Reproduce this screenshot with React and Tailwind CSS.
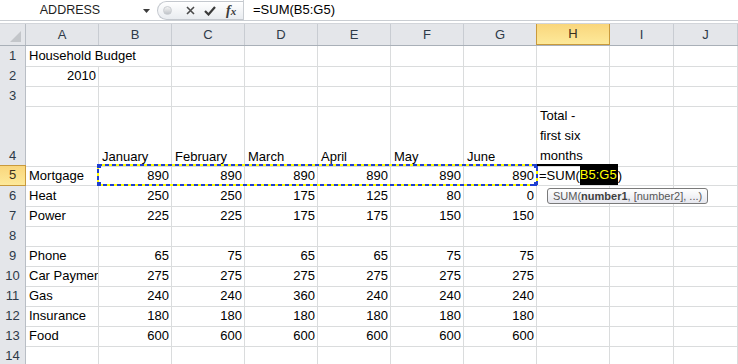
import React from 'react'

const COLS = 'grid grid-cols-[26px_repeat(8,73px)_64px_1fr]'
const LETTERS = ['A', 'B', 'C', 'D', 'E', 'F', 'G', 'H', 'I', 'J']

const rows = [
  { n: 1, cells: ['Household Budget'] },
  { n: 2, cells: [2010] },
  { n: 3, cells: [] },
  { n: 4, tall: true, cells: ['', 'January', 'February', 'March', 'April', 'May', 'June'] },
  { n: 5, cells: ['Mortgage', 890, 890, 890, 890, 890, 890] },
  { n: 6, cells: ['Heat', 250, 250, 175, 125, 80, 0] },
  { n: 7, cells: ['Power', 225, 225, 175, 175, 150, 150] },
  { n: 8, cells: [] },
  { n: 9, cells: ['Phone', 65, 75, 65, 65, 75, 75] },
  { n: 10, cells: ['Car Payment', 275, 275, 275, 275, 275, 275] },
  { n: 11, cells: ['Gas', 240, 240, 360, 240, 240, 240] },
  { n: 12, cells: ['Insurance', 180, 180, 180, 180, 180, 180] },
  { n: 13, cells: ['Food', 600, 600, 600, 600, 600, 600] },
  { n: 14, cells: [] },
]

function FormulaBar() {
  return (
    <div className="h-[23px] bg-white">
      <div className="h-[21px] flex border-b border-[#c9cdd2]">
        <div className="w-[157px] relative flex items-center">
          <span className="flex-1 text-center pr-[17px] text-[12.5px] text-[#1e1e1e]">ADDRESS</span>
          <svg className="absolute right-[7px] top-[9px]" width="7" height="4" viewBox="0 0 7 4">
            <polygon points="0,0 7,0 3.5,4" fill="#3c3c3c" />
          </svg>
        </div>
        <div className="w-[86px] h-[19px] mt-[1px] rounded-l-full border border-r-0 border-[#c4c8ce] bg-gradient-to-b from-white to-[#e9ecf0] flex items-center">
          <div className="ml-[5px] w-[9px] h-[9px] rounded-full bg-gradient-to-b from-[#f4f4f4] to-[#bfc3c8] border border-[#c9ccd0]" />
          <svg className="ml-[14px]" width="9" height="9" viewBox="0 0 9 9">
            <path d="M1 1 L8 8 M8 1 L1 8" stroke="#4a4a4a" strokeWidth="1.6" />
          </svg>
          <svg className="ml-[9px]" width="12" height="10" viewBox="0 0 12 10">
            <path d="M1 5 L4.5 8.5 L11 1" stroke="#3a3a3a" strokeWidth="2.2" fill="none" />
          </svg>
          <span className="ml-[10px] text-[14px] italic font-bold text-[#3a3a3a] leading-none" style={{ fontFamily: '"Liberation Serif", serif' }}>
            f<span className="text-[11px]">x</span>
          </span>
        </div>
        <div className="flex-1 border-l border-[#c9cdd2] pl-[9px] flex items-center text-[13px] text-black">
          =SUM(B5:G5)
        </div>
      </div>
    </div>
  )
}

function HeaderRow() {
  return (
    <div className={`${COLS} h-[23px] border-t border-[#d2d5da] border-b border-b-[#a9b0b8]`}>
      <div className="relative bg-[#e4e6ea] border-r border-[#b9bec5]">
        <svg className="absolute right-[4px] bottom-[3px]" width="11" height="11" viewBox="0 0 11 11">
          <polygon points="11,0 11,11 0,11" fill="#c3c6ca" />
        </svg>
      </div>
      {LETTERS.map(l =>
        l === 'H' ? (
          <div key={l} className="bg-gradient-to-b from-[#f9d67c] to-[#fde99a] border-x border-b border-[#c99a3c] -ml-[1px] flex items-center justify-center text-[13px] text-[#3a3020]">
            {l}
          </div>
        ) : (
          <div key={l} className="bg-[#e4e6ea] border-r border-[#c8ccd2] flex items-center justify-center text-[13px] text-[#2e3a48]">
            {l}
          </div>
        )
      )}
    </div>
  )
}

function Cell({ v, row, col }) {
  const isNum = typeof v === 'number'
  const tall = row.tall
  let cls = 'border-r border-b border-[#dadcdd] whitespace-nowrap text-[13px] text-black leading-[19px] px-[3px] flex '
  cls += tall ? 'items-end ' : 'items-center '
  cls += isNum ? 'justify-end pr-[2px] ' : ''
  if (row.n === 1 && col === 0) cls += 'overflow-visible border-r-transparent '
  else cls += 'overflow-hidden '
  return <div className={cls}>{v === undefined ? '' : v}</div>
}

function EditCell() {
  return (
    <div className="relative border-r border-b border-[#dadcdd] flex items-center text-[13px] leading-[19px] whitespace-nowrap overflow-visible z-10">
      <div className="absolute -top-[2px] left-0 right-0 h-[2px] bg-black" />
      <span className="pl-[2px]">=SUM(</span>
      <span className="bg-black text-[#ffff00] h-[21px] -mt-[2px] flex items-center pr-[1px]">B5:G5</span>
      <span>)</span>
      <div className="absolute left-[10px] top-[22px] h-[16px] px-[5px] rounded-[3px] border border-[#7a7a7a] bg-gradient-to-b from-white to-[#e6e7ee] text-[11px] leading-[14px] text-[#575757] whitespace-nowrap">
        SUM(<b className="text-[#404040]">number1</b>, [number2], ...)
      </div>
    </div>
  )
}

function DataRow({ row }) {
  const sel = row.n === 5
  return (
    <div className={`${COLS} ${row.tall ? 'h-[60px]' : 'h-[20px]'}`}>
      <div
        className={
          sel
            ? 'bg-gradient-to-b from-[#f9d67c] to-[#fde99a] border-y border-r border-[#c99a3c] -mt-[1px] flex items-end justify-center pb-[1px] text-[13px] leading-[18px] text-[#3a3020]'
            : `bg-[#e4e6ea] border-r border-[#b9bec5] border-b border-b-[#c8ccd2] flex ${row.tall ? 'items-end pb-[1px]' : 'items-center'} justify-center text-[13px] text-[#2e3a48]`
        }
      >
        {row.n}
      </div>
      {LETTERS.map((l, i) => {
        if (sel && l === 'H') return <EditCell key={l} />
        if (row.tall && l === 'H') {
          return (
            <div key={l} className="border-r border-b border-[#dadcdd] text-[13px] leading-[20px] px-[3px] flex flex-col justify-end pb-[0px]">
              <span>Total -</span>
              <span>first six</span>
              <span>months</span>
            </div>
          )
        }
        return <Cell key={l} v={row.cells[i]} row={row} col={i} />
      })}
    </div>
  )
}

export default function App() {
  return (
    <div className="w-[738px] h-[364px] overflow-hidden bg-white select-none" style={{ fontFamily: '"Liberation Sans", Arial, sans-serif' }}>
      <FormulaBar />
      <div className="relative">
        <HeaderRow />
        {rows.map(r => <DataRow key={r.n} row={r} />)}
        <svg className="absolute left-[97px] top-[141px] pointer-events-none" width="441" height="22" viewBox="0 0 441 22">
          <rect x="1" y="1" width="439" height="20" fill="none" stroke="#ffff00" strokeWidth="2" />
          <rect x="1" y="1" width="439" height="20" fill="none" stroke="#1f3fd0" strokeWidth="2" strokeDasharray="4 3" />
          <rect x="0" y="0" width="4" height="4" fill="#1f3fd0" />
          <rect x="0" y="18" width="4" height="4" fill="#1f3fd0" />
          <rect x="437" y="0" width="4" height="4" fill="#1f3fd0" />
          <rect x="437" y="18" width="4" height="4" fill="#1f3fd0" />
        </svg>
      </div>
    </div>
  )
}
